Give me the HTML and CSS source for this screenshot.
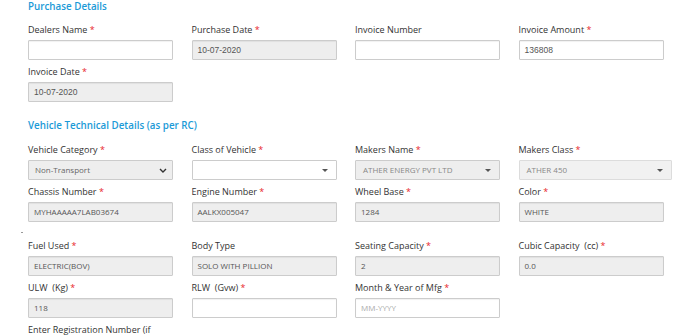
FILE: index.html
```
<!DOCTYPE html>
<html lang="en">
  <head>
    <meta charset="UTF-8" />
    <title>Vehicle Details</title>
    <link rel="stylesheet" href="styles.css">
  </head>
  <body>
    <!-- Purchase Details -->
    <h4 class="section-title first">Purchase Details</h4>
    <div class="fields">
      <div class="field">
        <label>Dealers Name <span class="req">*</span></label>
        <div class="box"></div>
      </div>
      <div class="field">
        <label>Purchase Date <span class="req">*</span></label>
        <div class="box disabled arial">10-07-2020</div>
      </div>
      <div class="field">
        <label>Invoice Number</label>
        <div class="box"></div>
      </div>
      <div class="field">
        <label>Invoice Amount <span class="req">*</span></label>
        <div class="box arial">136808</div>
      </div>
      <div class="field">
        <label>Invoice Date <span class="req">*</span></label>
        <div class="box disabled arial">10-07-2020</div>
      </div>
    </div>

    <!-- Vehicle Technical Details -->
    <h4 class="section-title">Vehicle Technical Details (as per RC)</h4>
    <div class="fields">
      <div class="field">
        <label>Vehicle Category <span class="req">*</span></label>
        <div class="box disabled select native">Non-Transport
          <svg class="chev" width="8" height="5" viewBox="0 0 8 5"><path d="M1 1l3 3 3-3" fill="none" stroke="#333" stroke-width="1.4"/></svg>
        </div>
      </div>
      <div class="field">
        <label>Class of Vehicle <span class="req">*</span></label>
        <div class="box select"><span class="caret"></span></div>
      </div>
      <div class="field">
        <label>Makers Name <span class="req">*</span></label>
        <div class="box disabled select light">ATHER ENERGY PVT LTD<span class="caret"></span></div>
      </div>
      <div class="field">
        <label>Makers Class <span class="req">*</span></label>
        <div class="box disabled select light wide">ATHER 450<span class="caret"></span></div>
      </div>
      <div class="field">
        <label>Chassis Number <span class="req">*</span></label>
        <div class="box disabled">MYHAAAAA7LAB03674</div>
      </div>
      <div class="field">
        <label>Engine Number <span class="req">*</span></label>
        <div class="box disabled">AALKX005047</div>
      </div>
      <div class="field">
        <label>Wheel Base <span class="req">*</span></label>
        <div class="box disabled">1284</div>
      </div>
      <div class="field">
        <label>Color <span class="req">*</span></label>
        <div class="box disabled">WHITE</div>
      </div>
      <div class="spacer"><span class="dot"></span></div>
      <div class="field">
        <label>Fuel Used <span class="req">*</span></label>
        <div class="box disabled">ELECTRIC(BOV)</div>
      </div>
      <div class="field">
        <label>Body Type</label>
        <div class="box disabled">SOLO WITH PILLION</div>
      </div>
      <div class="field">
        <label>Seating Capacity <span class="req">*</span></label>
        <div class="box disabled">2</div>
      </div>
      <div class="field">
        <label>Cubic Capacity &nbsp;(cc) <span class="req">*</span></label>
        <div class="box disabled">0.0</div>
      </div>
      <div class="field">
        <label>ULW &nbsp;(Kg) <span class="req">*</span></label>
        <div class="box disabled">118</div>
      </div>
      <div class="field">
        <label>RLW &nbsp;(Gvw) <span class="req">*</span></label>
        <div class="box"></div>
      </div>
      <div class="field">
        <label>Month &amp; Year of Mfg <span class="req">*</span></label>
        <div class="box placeholder">MM-YYYY</div>
      </div>
      <div class="field"></div>
      <div class="field">
        <label>Enter Registration Number (if applicable)</label>
        <div class="box"></div>
      </div>
    </div>
  </body>
</html>
```

FILE: styles.css
```
* {
  box-sizing: border-box;
  font-family: "Open Sans", sans-serif;
}

body {
  margin: 0;
  padding-top: 1px;
  background-color: white;
  overflow: hidden;
}

.section-title {
  margin: 0 0 11px 28px;
  font-size: 9.8px;
  line-height: 12px;
  font-weight: 600;
  color: #1b9ad7;
}

.first {
  margin-bottom: 10px;
}

.fields {
  display: grid;
  grid-template-columns: repeat(4, 145px);
  column-gap: 18.5px;
  row-gap: 5px;
  padding-left: 28px;
  margin-bottom: 18px;
}

.field {
  display: flex;
  flex-direction: column;
}

label {
  font-size: 9px;
  line-height: 14px;
  color: #333;
  margin-bottom: 3px;
}

.req {
  color: #e8262a;
}

.box {
  position: relative;
  height: 20px;
  border: 1px solid #cccccc;
  border-radius: 1px;
  box-shadow: inset 0 1px 1px rgba(0, 0, 0, 0.06);
  background-color: white;
  padding-left: 5px;
  font-size: 8px;
  line-height: 18px;
  color: #555;
  white-space: nowrap;
}

.disabled {
  background-color: #eeeeee;
}

.arial {
  font-family: "Liberation Sans", sans-serif;
  font-size: 8.5px;
}

.light {
  color: #888;
  padding-left: 7px;
}

.native {
  color: #666;
  padding-left: 6px;
}

.placeholder {
  color: #aaa;
}

.wide {
  width: 153px;
  background-color: #f1f1f1;
  border-color: #dcdcdc;
}

.select {
  box-shadow: none;
}

.chev {
  position: absolute;
  right: 5px;
  top: 7px;
}

.caret {
  position: absolute;
  right: 8px;
  top: 8px;
  border-left: 3px solid transparent;
  border-right: 3px solid transparent;
  border-top: 3px solid #555;
}

.spacer {
  grid-column: 1 / -1;
  height: 7px;
  padding-top: 5px;
  margin-left: -7px;
}

.dot {
  display: block;
  width: 2px;
  height: 1px;
  background-color: #999;
}
```
